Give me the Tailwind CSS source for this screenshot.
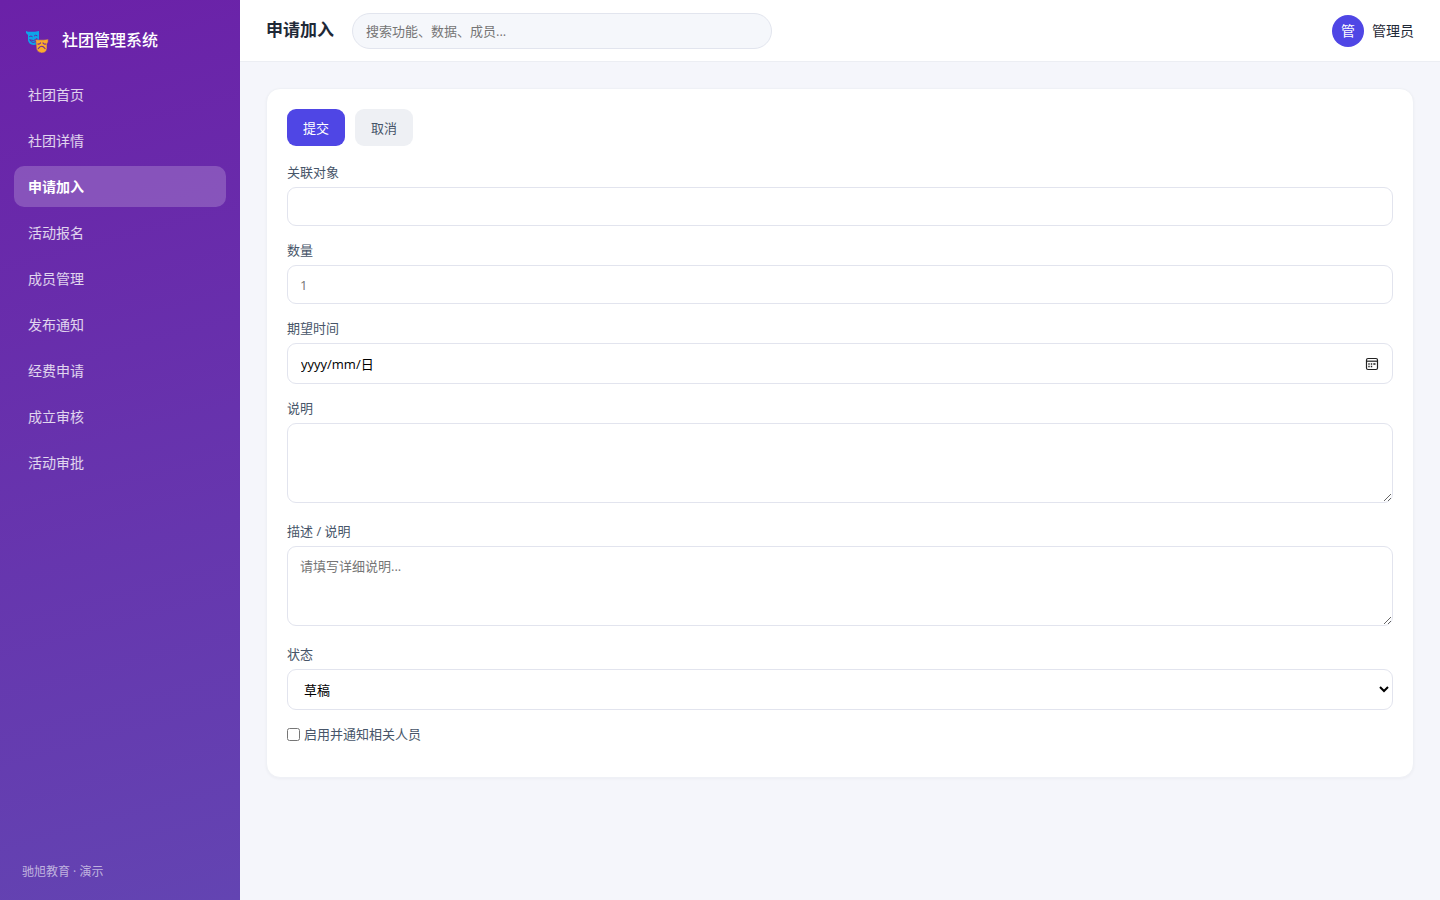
<!DOCTYPE html>
<html lang="zh-CN">
<head>
<meta charset="utf-8">
<meta name="viewport" content="width=device-width, initial-scale=1">
<title>申请加入 - 社团管理系统</title>
<script src="https://cdn.jsdelivr.net/npm/@tailwindcss/browser@4"></script>
</head>
<body class="flex min-h-screen bg-[#f5f6fb] font-['Open_Sans','Noto_Sans_CJK_SC',sans-serif] text-sm text-[#1f2937]">
<aside class="flex w-60 shrink-0 flex-col bg-[linear-gradient(165deg,#6b21a8,#6344b2)] px-3.5 py-5 text-white">
  <div class="mb-3.5 flex h-10 items-center gap-2 px-3">
    <svg class="size-7" viewBox="0 0 28 28" aria-hidden="true">
      <path fill="#0ea5e9" d="M0 5 2 5.800H9L13 5V14.500Q12.500 19 7.500 19Q3 18.500 2 14.500V9L0 7Z"/>
      <path fill="none" stroke="#6826a8" stroke-linecap="round" d="M3.500 10.500Q5 9.300 6.300 10.500M8.300 9.800Q9.500 8.500 11 9.600M4 14Q8 16 11 12.500Q10.500 16.500 7.500 16.500Q5 16.500 4 14Z"/>
      <path fill="#fbab2c" stroke="#6826a8" stroke-width=".5" d="M9.500 13.300 12 13.800H18L22.200 13V16L21 18V22.500Q20.300 27 15.500 27Q11.200 26.500 10.300 22.500L10 17Z"/>
      <path fill="none" stroke="#6826a8" stroke-width="1.200" stroke-linecap="round" d="M11.800 18Q13.500 18.500 14.500 17M17 17Q18 18.500 19.800 18M12.300 22.500Q15.500 18 19 22.500"/>
    </svg>
    <span class="text-base font-medium leading-none">社团管理系统</span>
  </div>
  <nav class="flex flex-col gap-[5px] leading-[21px] text-white/80" aria-label="主导航">
    <a href="#" class="rounded-[10px] px-3.5 py-2.5">社团首页</a>
    <a href="#" class="rounded-[10px] px-3.5 py-2.5">社团详情</a>
    <a href="#" aria-current="page" class="rounded-[10px] bg-white/20 px-3.5 py-2.5 font-bold text-white">申请加入</a>
    <a href="#" class="rounded-[10px] px-3.5 py-2.5">活动报名</a>
    <a href="#" class="rounded-[10px] px-3.5 py-2.5">成员管理</a>
    <a href="#" class="rounded-[10px] px-3.5 py-2.5">发布通知</a>
    <a href="#" class="rounded-[10px] px-3.5 py-2.5">经费申请</a>
    <a href="#" class="rounded-[10px] px-3.5 py-2.5">成立审核</a>
    <a href="#" class="rounded-[10px] px-3.5 py-2.5">活动审批</a>
  </nav>
  <p class="mt-auto px-2 text-xs leading-4 text-white/60">驰旭教育 · 演示</p>
</aside>

<div class="flex min-w-0 flex-1 flex-col">
  <header class="flex min-h-[62px] items-center border-b border-[#eceef3] bg-white px-[26px]">
    <h1 class="shrink-0 text-[17px] font-bold">申请加入</h1>
    <input type="search" aria-label="搜索" placeholder="搜索功能、数据、成员..." class="ml-[18px] h-9 w-full max-w-[420px] rounded-full border border-[#e2e5ee] bg-[#f5f7fb] px-[13px] text-[13px] outline-none placeholder:text-[#757575]">
    <div class="ml-auto flex shrink-0 items-center gap-2">
      <span class="flex size-8 items-center justify-center rounded-full bg-[#4f46e5] text-white">管</span>
      <span>管理员</span>
    </div>
  </header>

  <main class="p-[26px]">
    <form class="rounded-[14px] border border-[#eff1f6] bg-white p-5 text-[13px] leading-5 text-[#475569] shadow-[0_1px_3px_rgba(15,23,42,0.04)]">
      <div class="mb-4 flex gap-2.5">
        <button type="submit" class="h-[37px] rounded-[9px] bg-[#4f46e5] px-4 text-white">提交</button>
        <button type="button" class="h-[37px] rounded-[9px] bg-[#eef0f4] px-4">取消</button>
      </div>

      <div class="mb-3.5">
        <label for="target" class="mb-[5px] block">关联对象</label>
        <input id="target" type="text" class="block h-[39px] w-full rounded-[9px] border border-[#e2e4ee] px-3 text-black">
      </div>

      <div class="mb-3.5">
        <label for="amount" class="mb-[5px] block">数量</label>
        <input id="amount" type="text" inputmode="numeric" placeholder="1" class="block h-[39px] w-full rounded-[9px] border border-[#e2e4ee] px-3 text-black placeholder:text-[#757575]">
      </div>

      <div class="mb-3.5">
        <label for="date" class="mb-[5px] block">期望时间</label>
        <div class="flex h-[41px] items-center rounded-[9px] border border-[#e2e4ee] px-[13px]">
          <input id="date" type="text" placeholder="yyyy/mm/日" class="min-w-0 flex-1 text-black outline-none placeholder:text-black">
          <button type="button" aria-label="选择日期" class="text-[#222222]">
            <svg class="size-3.5" viewBox="0 0 14 14" fill="none" stroke="currentColor" aria-hidden="true">
              <rect x="1.500" y="1.500" width="11" height="11" rx="1.500" stroke-width="1.200"/>
              <path d="M1.500 4.200H12.500" stroke-width="1.200"/>
              <path d="M3.300 7H4.700M5.800 7H7.200M8.300 7H10.500M3.300 9.500H4.700M5.800 9.500H7.200" stroke-width="1.400"/>
            </svg>
          </button>
        </div>
      </div>

      <div class="mb-[18px]">
        <label for="note" class="mb-[5px] block">说明</label>
        <textarea id="note" class="block h-20 w-full resize rounded-[9px] border border-[#e2e4ee] px-3 py-[9px] text-black"></textarea>
      </div>

      <div class="mb-[18px]">
        <label for="detail" class="mb-[5px] block">描述 / 说明</label>
        <textarea id="detail" placeholder="请填写详细说明..." class="block h-20 w-full resize rounded-[9px] border border-[#e2e4ee] px-3 py-[9px] text-black placeholder:text-[#757575]"></textarea>
      </div>

      <div class="mb-3.5">
        <label for="status" class="mb-[5px] block">状态</label>
        <select id="status" class="block h-[41px] w-full rounded-[9px] border border-[#e2e4ee] bg-white px-3 text-black">
          <option>草稿</option>
          <option>已提交</option>
        </select>
      </div>

      <label class="mb-[13px] flex items-center gap-1">
        <input type="checkbox" class="size-[13px]">
        <span>启用并通知相关人员</span>
      </label>
    </form>
  </main>
</div>
</body>
</html>
